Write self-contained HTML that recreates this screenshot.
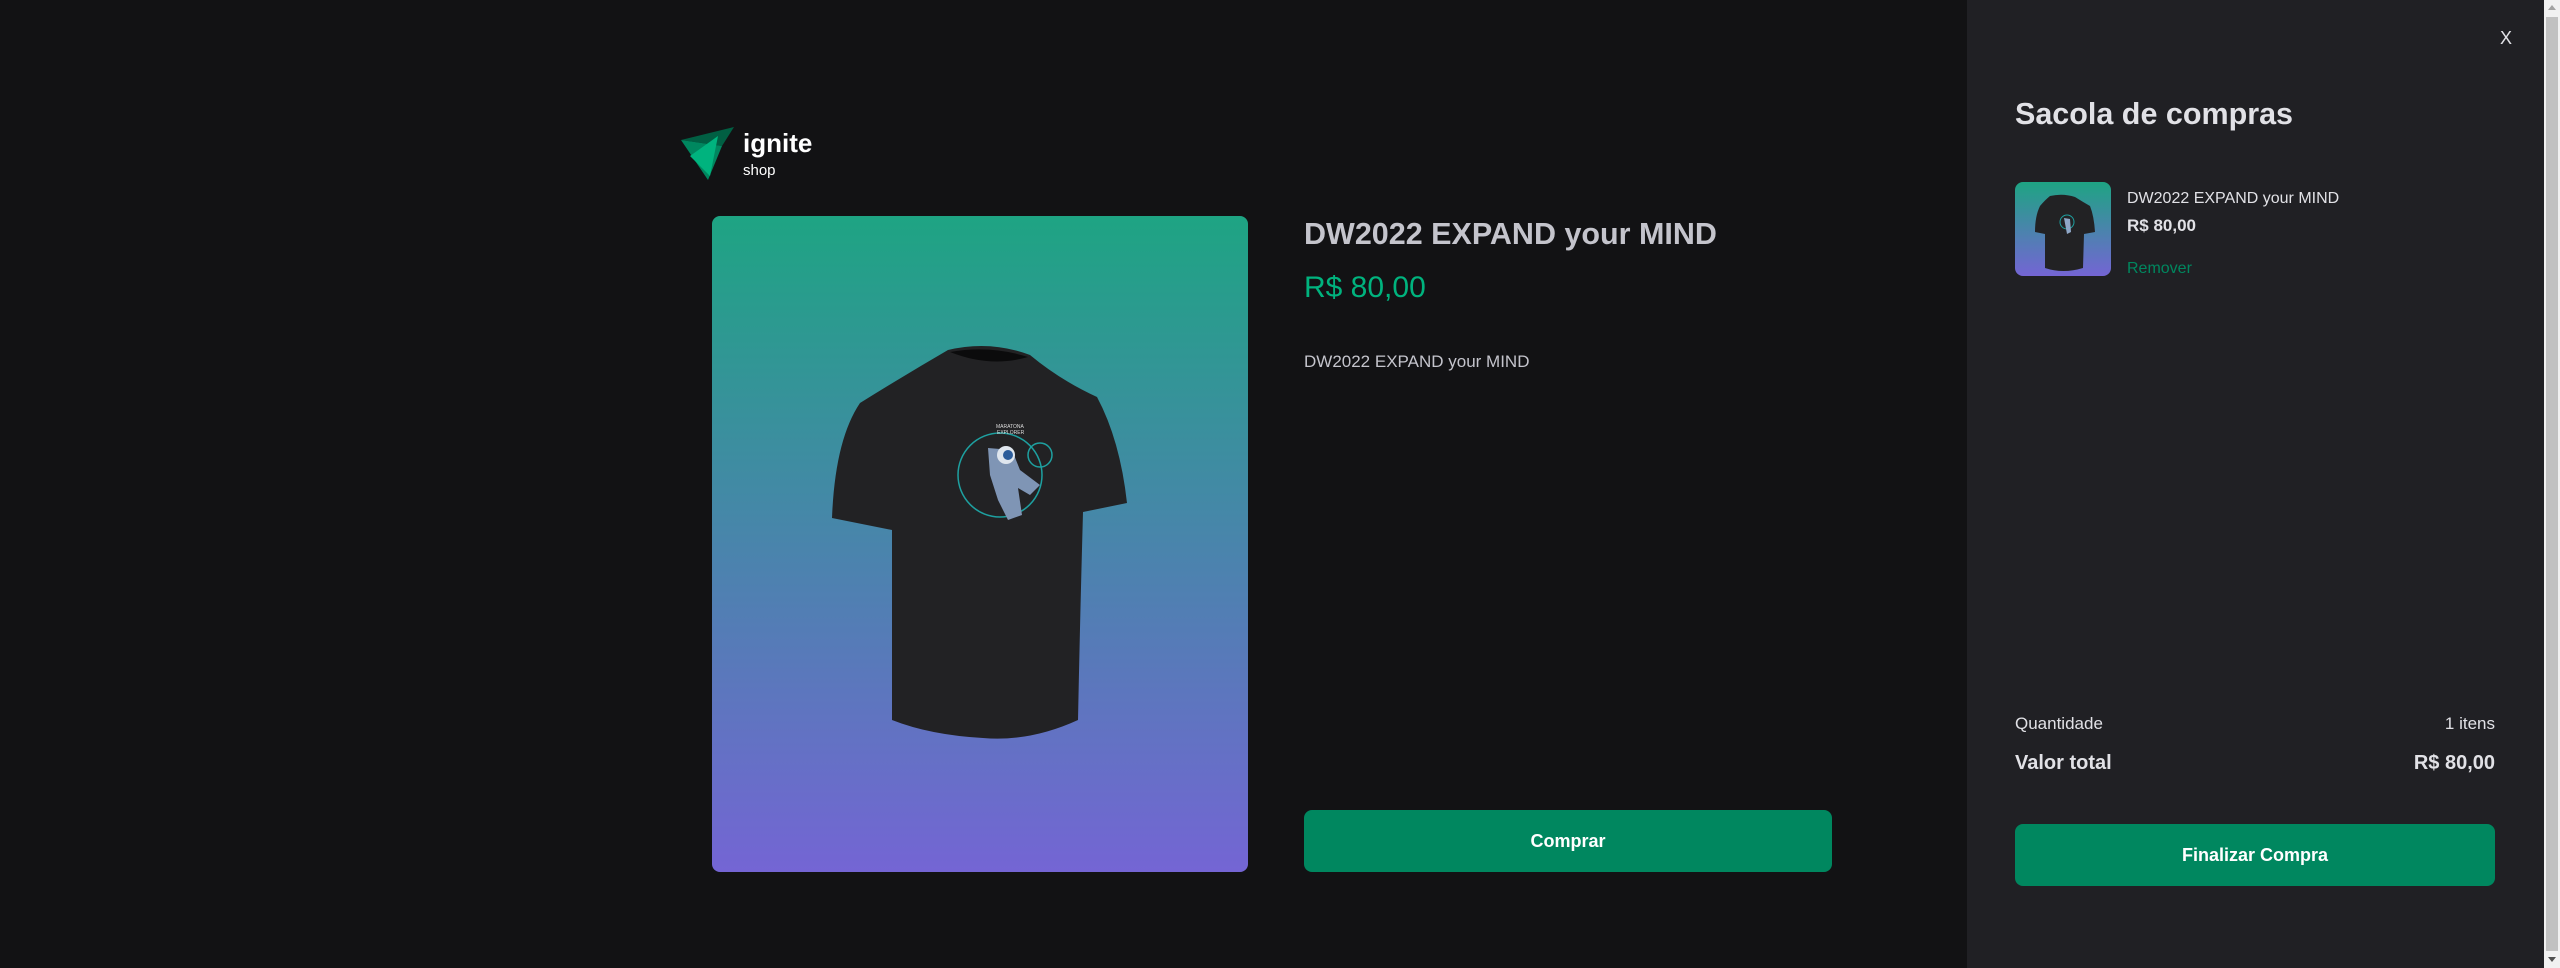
<!DOCTYPE html>
<html><head><meta charset="utf-8"><style>
*{margin:0;padding:0;box-sizing:border-box}
body{width:2560px;height:968px;background:#121214;font-family:"Liberation Sans",Roboto,sans-serif;position:relative;overflow:hidden;color:#e1e1e6}
.a{position:absolute;white-space:nowrap}
.btn{position:absolute;background:#00875f;border-radius:8px;color:#fff;font-weight:bold;font-size:18px;display:flex;align-items:center;justify-content:center}
</style></head><body>
<svg class="a" style="left:680px;top:126px" width="56" height="56" viewBox="0 0 56 56">
<polygon points="1,14 54,1 42,20" fill="#015f43"/>
<polygon points="1,14 42,20 28,54" fill="#00875f"/>
<polygon points="10,30 38,10 30,50" fill="#00b37e"/>
</svg>
<div class="a" style="left:743px;top:128px;font-size:26px;font-weight:bold;color:#fff">ignite</div>
<div class="a" style="left:743px;top:162px;font-size:15px;color:#fff">shop</div>

<div class="a" style="left:712px;top:216px;width:536px;height:656px;border-radius:8px;background:linear-gradient(180deg,#1ea483,#7465d4)"></div>
<svg class="a" style="left:0;top:0" width="1300" height="900">
<path d="M948,350 Q990,340 1030,355 Q1060,380 1097,397 Q1120,440 1127,503 L1083,512 Q1080,620 1078,720 Q1030,742 983,738 Q930,735 892,720 L892,530 L832,518 Q835,440 860,403 Q905,375 948,350 Z" fill="#222224"/>
<path d="M950,352 Q990,345 1028,357 Q990,368 950,352Z" fill="#0b0b0c"/>
<circle cx="1000" cy="475" r="42" fill="none" stroke="#1ea0a0" stroke-width="1.5"/>
<circle cx="1040" cy="455" r="12" fill="none" stroke="#1ea0a0" stroke-width="1.5"/>
<path d="M988,448 L1012,450 L1020,470 L1040,485 L1030,495 L1018,488 L1022,515 L1008,520 L998,500 L990,475 Z" fill="#7f95b5"/>
<circle cx="1006" cy="455" r="9" fill="#dfe6ee"/>
<circle cx="1008" cy="455" r="5" fill="#2b5c9a"/>
<text x="996" y="428" font-size="5" fill="#ddd" font-family="Liberation Sans">MARATONA</text>
<text x="997" y="434" font-size="5" fill="#ddd" font-family="Liberation Sans">EXPLORER</text>
</svg>

<div class="a" style="left:1304px;top:217px;font-size:30.5px;font-weight:bold;color:#c4c4cc">DW2022 EXPAND your MIND</div>
<div class="a" style="left:1304px;top:271px;font-size:30px;color:#00b37e">R$ 80,00</div>
<div class="a" style="left:1304px;top:352px;font-size:17px;color:#c4c4cc">DW2022 EXPAND your MIND</div>
<div class="btn" style="left:1304px;top:810px;width:528px;height:62px">Comprar</div>

<div class="a" style="left:1967px;top:0;width:577px;height:968px;background:#202024"></div>
<div class="a" style="left:2500px;top:28px;font-size:18px;color:#e1e1e6">X</div>
<div class="a" style="left:2015px;top:97px;font-size:30.5px;font-weight:bold">Sacola de compras</div>
<div class="a" style="left:2015px;top:182px;width:96px;height:94px;border-radius:8px;background:linear-gradient(180deg,#1ea483,#7465d4)">
<svg width="96" height="94" viewBox="0 0 96 94"><path d="M35,14 Q48,11 60,15 Q68,20 75,24 Q79,34 80,50 L69,52 L68,86 Q48,92 30,86 L30,52 L20,50 Q20,34 25,24 Q30,18 35,14Z" fill="#222224"/><circle cx="52" cy="40" r="7" fill="none" stroke="#1ea0a0"/><path d="M49,36 L55,37 L56,50 L52,52 Z" fill="#8fa7c7"/></svg>
</div>
<div class="a" style="left:2127px;top:190px;font-size:16px;color:#e1e1e6">DW2022 EXPAND your MIND</div>
<div class="a" style="left:2127px;top:216px;font-size:17px;font-weight:bold">R$ 80,00</div>
<div class="a" style="left:2127px;top:260px;font-size:16px;color:#00875f">Remover</div>

<div class="a" style="left:2015px;top:714px;font-size:17px;color:#e1e1e6">Quantidade</div>
<div class="a" style="right:65px;top:714px;font-size:17px;color:#e1e1e6">1 itens</div>
<div class="a" style="left:2015px;top:752px;font-size:20px;font-weight:bold">Valor total</div>
<div class="a" style="right:65px;top:752px;font-size:20px;font-weight:bold">R$ 80,00</div>
<div class="btn" style="left:2015px;top:824px;width:480px;height:62px">Finalizar Compra</div>

<div class="a" style="left:2544px;top:0;width:16px;height:968px;background:#f1f1f1"></div>
<div class="a" style="left:2546px;top:17px;width:12px;height:934px;background:#c1c1c1"></div>
<div class="a" style="left:2548px;top:5px;width:0;height:0;border-left:4px solid transparent;border-right:4px solid transparent;border-bottom:5px solid #a3a3a3"></div>
<div class="a" style="left:2548px;top:957px;width:0;height:0;border-left:4px solid transparent;border-right:4px solid transparent;border-top:5px solid #505050"></div>
</body></html>
